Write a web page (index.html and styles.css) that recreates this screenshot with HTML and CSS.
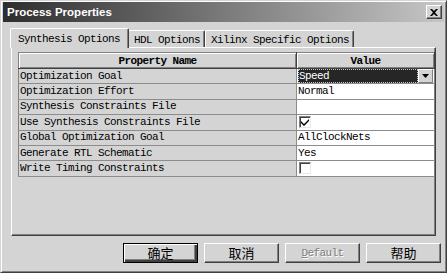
FILE: index.html
```html
<!DOCTYPE html>
<html>
<head>
<meta charset="utf-8">
<link rel="stylesheet" href="styles.css">
</head>
<body>
<div class="window">
  <div class="titlebar">
    <span class="title">Process Properties</span>
    <span class="close"><svg width="8" height="7" viewBox="0 0 8 7"><path d="M0 0h2l2 2 2-2h2L5 3.5 8 7H6L4 5 2 7H0l3-3.5z" fill="#000"/></svg></span>
  </div>
  <div class="tabs">
    <div class="tab active">Synthesis Options</div>
    <div class="tab">HDL Options</div>
    <div class="tab">Xilinx Specific Options</div>
  </div>
  <div class="panel">
    <table class="grid">
      <colgroup><col class="c1"><col class="c2"></colgroup>
      <thead>
        <tr><th>Property Name</th><th>Value</th></tr>
      </thead>
      <tbody>
        <tr><td class="name">Optimization Goal</td><td class="val"><div class="combo"><span class="sel">Speed</span><span class="arrow"><svg width="7" height="4" viewBox="0 0 7 4"><path d="M0 0h7L3.5 4z" fill="#000"/></svg></span></div></td></tr>
        <tr><td class="name">Optimization Effort</td><td class="val">Normal</td></tr>
        <tr><td class="name">Synthesis Constraints File</td><td class="val"></td></tr>
        <tr><td class="name">Use Synthesis Constraints File</td><td class="val"><span class="check"><svg width="8" height="8" viewBox="0 0 8 8"><path d="M0 3l3 3 5-5v2L3 8 0 5z" fill="#000"/></svg></span></td></tr>
        <tr><td class="name">Global Optimization Goal</td><td class="val">AllClockNets</td></tr>
        <tr><td class="name">Generate RTL Schematic</td><td class="val">Yes</td></tr>
        <tr><td class="name">Write Timing Constraints</td><td class="val"><span class="check"></span></td></tr>
      </tbody>
    </table>
  </div>
  <div class="buttons">
    <button class="btn default">确定</button>
    <button class="btn">取消</button>
    <button class="btn disabled"><u>D</u>efault</button>
    <button class="btn">帮助</button>
  </div>
</div>
</body>
</html>
```
FILE: styles.css
```css
html, body {
  margin: 0;
  padding: 0;
  background: #d4d4d4;
}
.window {
  width: 447px;
  height: 273px;
  box-sizing: border-box;
  background: #d4d4d4;
  border-top: 1px solid #d4d4d4;
  border-left: 1px solid #d4d4d4;
  border-right: 1px solid #404040;
  border-bottom: 1px solid #404040;
  box-shadow: inset 1px 1px #fff, inset -1px -1px #808080;
  padding: 1px 2px 2px 2px;
  display: flex;
  flex-direction: column;
  font-family: "Liberation Mono", monospace;
  font-size: 11px;
  letter-spacing: -0.6px;
  color: #000;
}
.titlebar {
  height: 20px;
  background: linear-gradient(to right, #2e2e2e 0%, #7a7a7a 50%, #c6c6c6 100%);
  display: flex;
  align-items: center;
  justify-content: space-between;
  padding: 0 2px 0 4px;
}
.title {
  font-family: "Liberation Sans", Arial, sans-serif;
  font-weight: bold;
  font-size: 11.5px;
  letter-spacing: 0;
  color: #fff;
}
.close {
  width: 16px;
  height: 14px;
  box-sizing: border-box;
  background: #d4d4d4;
  border-top: 1px solid #fff;
  border-left: 1px solid #fff;
  border-right: 1px solid #404040;
  border-bottom: 1px solid #404040;
  box-shadow: inset -1px -1px #808080;
  display: flex;
  align-items: center;
  justify-content: center;
}
.tabs {
  display: flex;
  margin-top: 8px;
  padding-left: 9px;
  height: 17px;
  position: relative;
  z-index: 2;
}
.tab {
  height: 17px;
  box-sizing: border-box;
  padding: 3px 4px 0 5px;
  border-top: 1px solid #fff;
  border-left: 1px solid #fff;
  border-right: 1px solid #404040;
  box-shadow: inset -1px 0 #808080;
  border-radius: 2px 2px 0 0;
  white-space: nowrap;
  background: #d4d4d4;
}
.tab.active {
  height: 20px;
  margin-top: -2px;
  margin-left: -2px;
  margin-right: -1px;
  padding: 4px 8px 0 7px;
  position: relative;
  z-index: 3;
}
.panel {
  margin: 0 8px 0 8px;
  height: 189px;
  box-sizing: border-box;
  border-top: 1px solid #fff;
  border-left: 1px solid #fff;
  border-right: 1px solid #404040;
  border-bottom: 1px solid #404040;
  box-shadow: inset -1px -1px #808080;
  padding: 4px 4px 0 6px;
}
.grid {
  border-collapse: collapse;
  table-layout: fixed;
  width: 416px;
  border: 1px solid #808080;
}
.c1 { width: 278px; }
.c2 { width: 138px; }
.grid th {
  height: 15px;
  padding: 0;
  font-weight: bold;
  text-align: center;
  background: #d4d4d4;
  box-shadow: inset 1px 1px #fff, inset -1px -1px #808080;
  border-right: 1px solid #404040;
  border-bottom: 1px solid #404040;
  line-height: 14px;
}
.grid td {
  height: 14.4px;
  padding: 0 0 0 1px;
  border-bottom: 1px solid #8c8c8c;
  white-space: nowrap;
  line-height: 13px;
}
.grid td.name {
  background: #d4d4d4;
  border-right: 1px solid #8c8c8c;
}
.grid td.val {
  background: #fff;
  padding-left: 1px;
}
.combo {
  display: flex;
  height: 14px;
  margin-right: 1px;
}
.sel {
  flex: 1;
  background: #262626;
  color: #fff;
  outline: 1px dotted #c8c8c8;
  outline-offset: -1px;
  padding-left: 1px;
  line-height: 14px;
}
.arrow {
  width: 15px;
  box-sizing: border-box;
  background: #d4d4d4;
  border-top: 1px solid #fff;
  border-left: 1px solid #fff;
  border-right: 1px solid #808080;
  border-bottom: 1px solid #808080;
  display: flex;
  align-items: center;
  justify-content: center;
}
.check {
  display: inline-flex;
  align-items: center;
  justify-content: center;
  vertical-align: middle;
  width: 12px;
  height: 12px;
  box-sizing: border-box;
  margin-left: 1px;
  background: #fff;
  border-top: 1px solid #808080;
  border-left: 1px solid #808080;
  border-right: 1px solid #e8e8e8;
  border-bottom: 1px solid #e8e8e8;
  box-shadow: inset 1px 1px #404040;
}
.buttons {
  display: flex;
  justify-content: flex-end;
  gap: 6px;
  margin-top: 7px;
  padding-right: 3px;
}
.btn {
  width: 75px;
  height: 20px;
  box-sizing: border-box;
  margin: 0;
  padding: 0;
  background: #d4d4d4;
  border-top: 1px solid #fff;
  border-left: 1px solid #fff;
  border-right: 1px solid #404040;
  border-bottom: 1px solid #404040;
  box-shadow: inset -1px -1px #808080;
  font-family: "Noto Sans CJK SC", sans-serif;
  font-size: 13px;
  color: #000;
  line-height: 16px;
}
.btn.default {
  border: 1px solid #000;
  box-shadow: inset 1px 1px #fff, inset -2px -2px #404040, inset -3px -3px #808080;
}
.btn.disabled {
  font-family: "Liberation Mono", monospace;
  font-size: 11px;
  letter-spacing: -0.6px;
  color: #808080;
  text-shadow: 1px 1px #fff;
}
```
